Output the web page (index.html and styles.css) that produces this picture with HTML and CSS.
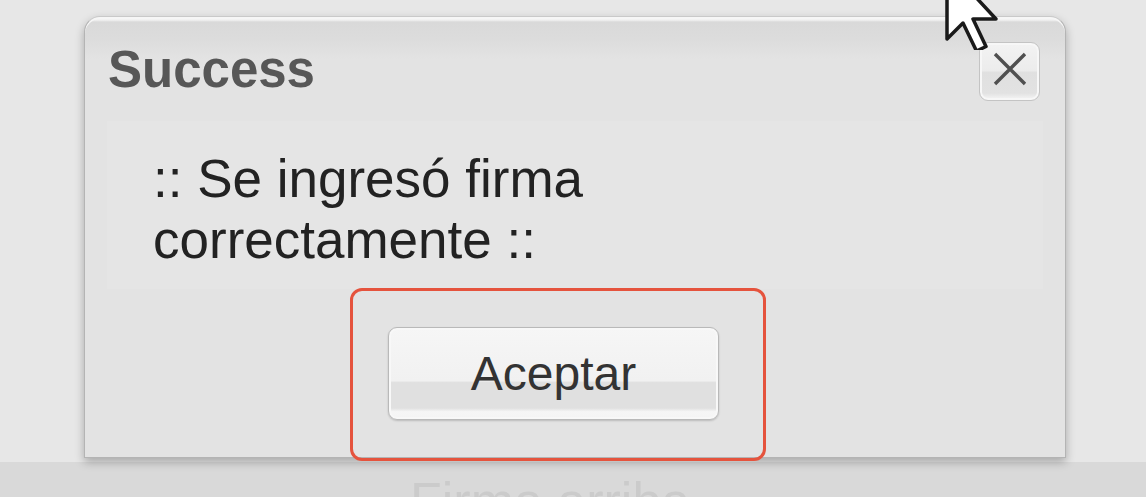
FILE: index.html
```html
<!DOCTYPE html>
<html lang="es">
<head>
  <meta charset="UTF-8">
  <meta name="viewport" content="width=device-width, initial-scale=1.0">
  <title>Success</title>
  <link rel="stylesheet" href="styles.css">
</head>
<body>

  <div class="stage">
    <div class="dialog" id="successDialog">
      <div class="dialog-header">
        <h1 class="dialog-title">Success</h1>
        <button class="close-button" id="closeButton" aria-label="Cerrar">
          <svg width="36" height="34" viewBox="0 0 36 34">
            <path d="M3 2 L33 32 M33 2 L3 32" stroke="#505050" stroke-width="3.4" fill="none"/>
          </svg>
        </button>
      </div>

      <div class="message-panel">
        <p class="message">:: Se ingresó firma correctamente ::</p>
      </div>

      <div class="button-row">
        <button class="accept-button" id="acceptButton">Aceptar</button>
      </div>

      <div class="highlight"></div>
    </div>

    <svg class="cursor" width="70" height="90" viewBox="0 0 70 90">
      <path d="M6 6 L6 79 L22 63 L35.5 91 L45 86.5 L32 59 L55 59 Z" fill="#ffffff" stroke="#1a1a1a" stroke-width="3.5" stroke-linejoin="round"/>
    </svg>
  </div>

  <div class="footer">
    <span class="footer-text">Firma arriba</span>
  </div>

</body>
</html>
```

FILE: styles.css
```css
body {
  margin: 0;
  background-color: #e7e7e7;
  font-family: 'Liberation Sans', Arial, sans-serif;
  overflow: hidden;
}
.stage {
  position: relative;
  height: 462px;
  padding-top: 16px;
  box-sizing: border-box;
}
.dialog {
  position: relative;
  z-index: 1;
  margin-left: 84px;
  width: 982px;
  height: 442px;
  box-sizing: border-box;
  background-color: #e3e3e3;
  border: 1px solid #b4b4b4;
  border-top-color: #c9c9c9;
  border-radius: 16px 16px 0 0;
  box-shadow: 0 4px 10px rgba(0, 0, 0, 0.28), inset 0 2px 0 #f6f6f6;
  background-image: linear-gradient(#f2f2f2 0, #f2f2f2 3px, #d9d9d9 5px, #dcdcdc 22px, #e3e3e3 42px, #e3e3e3 100%);
}
.dialog-header {
  display: flex;
  justify-content: space-between;
  align-items: flex-start;
  padding: 23px 25px 0 23px;
}
.dialog-title {
  margin: 0;
  font-size: 51px;
  line-height: 60px;
  font-weight: bold;
  color: #575757;
}
.close-button {
  margin-top: 2px;
  width: 61px;
  height: 59px;
  padding: 0;
  display: flex;
  align-items: center;
  justify-content: center;
  border: 1px solid #c4c4c4;
  border-radius: 9px;
  background: linear-gradient(#f3f3f3 0, #ececec 48%, #e0e0e0 52%, #e2e2e2 88%, #f7f7f7 100%);
  box-shadow: inset 0 0 0 2px #f7f7f7;
}
.close-button svg {
  margin-top: -6px;
}
.message-panel {
  margin: 20px 22px 0 22px;
  height: 168px;
  box-sizing: border-box;
  padding: 27px 0 0 46px;
  background-color: #e5e5e5;
}
.message {
  margin: 0;
  width: 470px;
  font-size: 53px;
  line-height: 61px;
  color: #222;
}
.button-row {
  display: flex;
  padding: 38px 0 0 303px;
}
.accept-button {
  width: 331px;
  height: 93px;
  padding: 0;
  font-family: 'Liberation Sans', Arial, sans-serif;
  font-size: 48px;
  color: #333;
  border: 1px solid #b9b9b9;
  border-radius: 9px;
  background: linear-gradient(#f6f6f6 0, #f1f1f1 58%, #e0e0e0 60%, #e0e0e0 88%, #f6f6f6 92%, #f4f4f4 100%);
  box-shadow: 0 1px 2px rgba(0, 0, 0, 0.18), inset 0 0 0 2px #f8f8f8;
}
.highlight {
  position: absolute;
  left: 265px;
  top: 271px;
  width: 416px;
  height: 173px;
  box-sizing: border-box;
  border: 3px solid #e5533d;
  border-radius: 12px;
}
.cursor {
  position: absolute;
  z-index: 2;
  left: 941px;
  top: -40px;
}
.footer {
  height: 35px;
  background-color: #d9d9d9;
  padding: 9px 0 0 410px;
  box-sizing: border-box;
}
.footer-text {
  font-size: 52px;
  color: #cbcbcb;
  white-space: nowrap;
}
```
